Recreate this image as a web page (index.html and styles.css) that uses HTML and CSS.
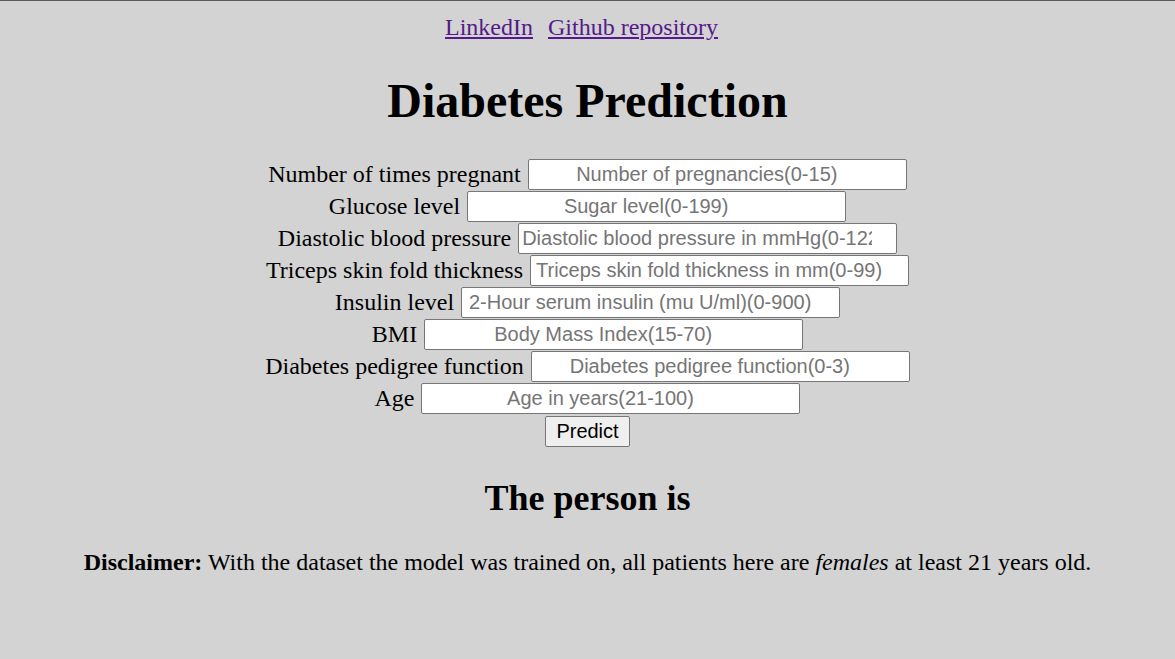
FILE: index.html
```html
<!DOCTYPE html>
<html>
<head>
<meta charset="utf-8">
<title>Diabetes Prediction</title>
<link rel="stylesheet" href="styles.css">
</head>
<body>
<nav class="links">
  <a href="#">LinkedIn</a>
  <a href="#">Github repository</a>
</nav>
<h1 class="title">Diabetes Prediction</h1>
<form class="form">
  <div class="row"><label>Number of times pregnant</label><input class="field" type="number" placeholder="Number of pregnancies(0-15)"></div>
  <div class="row"><label>Glucose level</label><input class="field" type="number" placeholder="Sugar level(0-199)"></div>
  <div class="row"><label>Diastolic blood pressure</label><input class="field" type="number" placeholder="Diastolic blood pressure in mmHg(0-122)"></div>
  <div class="row"><label>Triceps skin fold thickness</label><input class="field" type="number" placeholder="Triceps skin fold thickness in mm(0-99)"></div>
  <div class="row"><label>Insulin level</label><input class="field" type="number" placeholder="2-Hour serum insulin (mu U/ml)(0-900)"></div>
  <div class="row"><label>BMI</label><input class="field" type="number" placeholder="Body Mass Index(15-70)"></div>
  <div class="row"><label>Diabetes pedigree function</label><input class="field" type="number" placeholder="Diabetes pedigree function(0-3)"></div>
  <div class="row"><label>Age</label><input class="field" type="number" placeholder="Age in years(21-100)"></div>
  <div class="row row-btn"><button type="button" class="btn">Predict</button></div>
</form>
<h2 class="result">The person is</h2>
<p class="disclaimer"><b>Disclaimer:</b> With the dataset the model was trained on, all patients here are <i>females</i> at least 21 years old.</p>
</body>
</html>
```
FILE: styles.css
```css
html {
  background: #d3d3d3;
  border-top: 1px solid #5a5a5a;
}
body {
  margin: 0;
  padding: 8px;
  font-family: "Liberation Serif", "Times New Roman", serif;
  font-size: 24px;
  color: #000;
  text-align: center;
}
.links {
  display: flex;
  justify-content: center;
  gap: 15px;
  line-height: 36px;
  padding-right: 12px;
}
.links a {
  color: #551a8b;
}
.title {
  font-size: 48px;
  margin: 28px 0 29px;
  line-height: 56px;
}
.form {
  display: flex;
  flex-direction: column;
  align-items: center;
}
.row {
  display: flex;
  align-items: center;
  gap: 7px;
  height: 32px;
}
.row-btn {
  margin-top: 1px;
}
.field {
  width: 379px;
  height: 31px;
  box-sizing: border-box;
  font-family: "Liberation Sans", Arial, sans-serif;
  font-size: 20px;
  text-align: center;
  border: 1px solid #767676;
  border-radius: 2px;
  background: #fff;
  padding: 1px 9px 1px 3px;
}
.field::placeholder {
  color: #757575;
}
.btn {
  font-family: "Liberation Sans", Arial, sans-serif;
  font-size: 20px;
  height: 31px;
  padding: 1px 10px;
  background: #efefef;
  border: 1px solid #767676;
  border-radius: 2px;
  color: #000;
}
.result {
  font-size: 36px;
  margin: 30px 0 0;
  line-height: 42px;
}
.disclaimer {
  margin: 30px 0 0;
}
```
